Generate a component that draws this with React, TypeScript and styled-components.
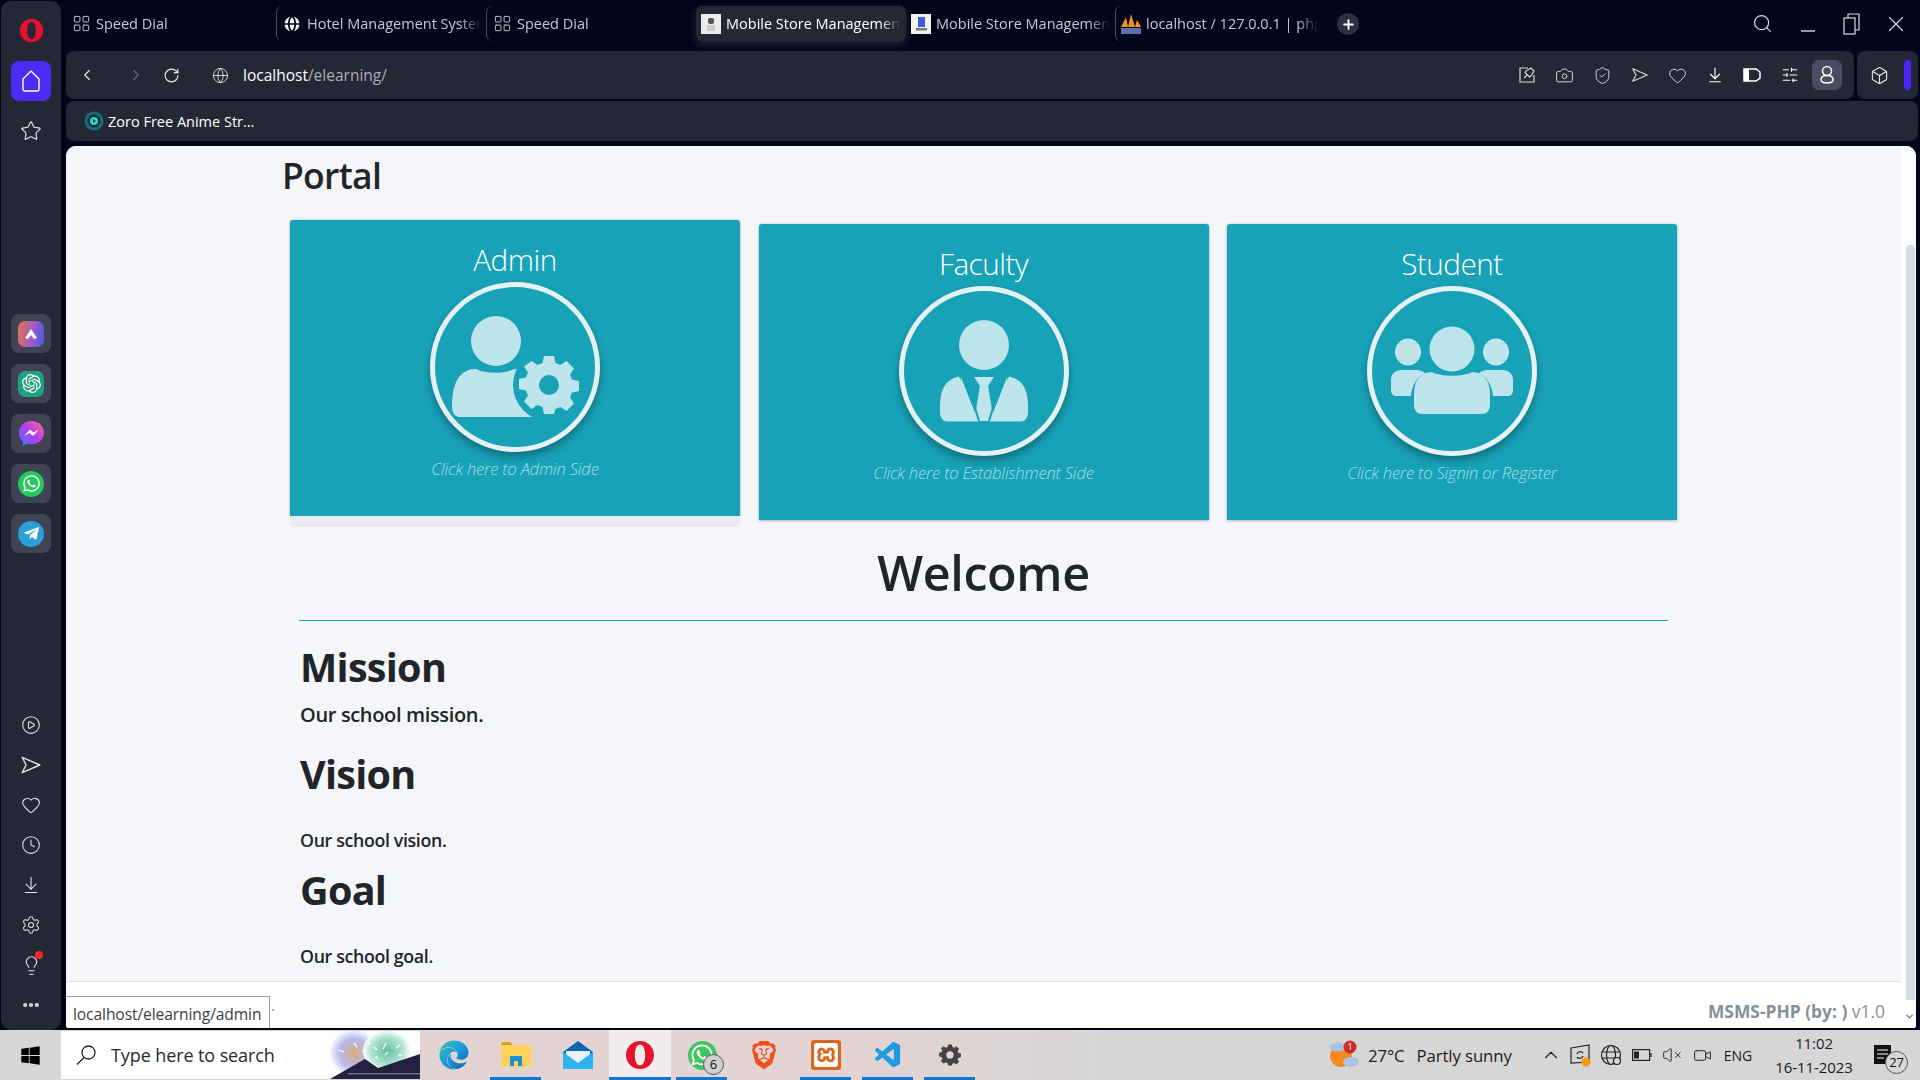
import React from "react";
import styled, { createGlobalStyle } from "styled-components";
import {
  ArrowDownToLine,
  Box,
  Camera,
  ChevronDown,
  ChevronLeft,
  ChevronRight,
  ChevronUp,
  Clock,
  Globe,
  Heart,
  Lightbulb,
  Plus,
  RotateCw,
  Search,
  Settings,
  ShieldCheck,
  SlidersHorizontal,
  Star,
  Video,
  VolumeX,
  X,
  CirclePlay,
  LayoutGrid,
  Ellipsis,
} from "lucide-react";
import { FaEdge, FaTelegramPlane, FaWhatsapp, FaWindows } from "react-icons/fa";
import { SiBrave, SiOpenai, SiXampp } from "react-icons/si";
import { VscVscode } from "react-icons/vsc";

const FONT = `"Open Sans", "Noto Sans", sans-serif`;

const GlobalStyle = createGlobalStyle`
  html, body {
    margin: 0;
    padding: 0;
    background: #03061a;
    overflow: hidden;
  }
  * {
    box-sizing: border-box;
  }
  body {
    font-family: ${FONT};
  }
`;

const Screen = styled.div`
  width: 1920px;
  height: 1080px;
  display: flex;
  flex-direction: column;
  background: #03061a;
`;

const Browser = styled.div`
  flex: 1;
  min-height: 0;
  display: flex;
`;

const Sidebar = styled.aside`
  width: 60px;
  margin: 1px 5px 0 1px;
  padding-top: 5px;
  background: #242835;
  border-radius: 10px;
  display: flex;
  flex-direction: column;
  align-items: center;
  color: #dfe1e6;
`;

const OperaSlot = styled.div`
  height: 49px;
  display: flex;
  align-items: center;
  justify-content: center;
`;

const HomeButton = styled.div`
  margin-top: 6px;
  width: 40px;
  height: 40px;
  border-radius: 8px;
  background: #4b2bf5;
  color: #fff;
  display: flex;
  align-items: center;
  justify-content: center;
`;

const StarSlot = styled.div`
  margin-top: 10px;
  height: 40px;
  display: flex;
  align-items: center;
  justify-content: center;
`;

const AppTiles = styled.div`
  margin-top: 163px;
  display: flex;
  flex-direction: column;
  gap: 11px;
`;

const AppTile = styled.div`
  width: 40px;
  height: 39px;
  border-radius: 8px;
  background: #404354;
  display: flex;
  align-items: center;
  justify-content: center;
`;

const AppBadge = styled.div<{ $bg: string; $square?: boolean; $size?: number }>`
  width: ${({ $size }) => $size ?? 26}px;
  height: ${({ $size }) => $size ?? 26}px;
  border-radius: ${({ $square }) => ($square ? "7px" : "50%")};
  background: ${({ $bg }) => $bg};
  display: flex;
  align-items: center;
  justify-content: center;
  color: #fff;
`;

const SideTools = styled.div`
  margin-top: 152px;
  display: flex;
  flex-direction: column;
  align-items: center;
`;

const SideTool = styled.div`
  position: relative;
  width: 40px;
  height: 40px;
  display: flex;
  align-items: center;
  justify-content: center;
  color: #dfe1e6;
`;

const RedDot = styled.span`
  position: absolute;
  top: 6px;
  right: 8px;
  width: 8px;
  height: 8px;
  border-radius: 50%;
  background: #f22727;
`;

const Chrome = styled.div`
  flex: 1;
  min-width: 0;
  display: flex;
  flex-direction: column;
`;

const TabStrip = styled.div`
  height: 51px;
  padding-top: 6px;
  display: flex;
  align-items: flex-start;
`;

const Tab = styled.div<{ $active?: boolean; $divider?: boolean; $w: number }>`
  position: relative;
  width: ${({ $w }) => $w}px;
  height: 35px;
  padding: 0 5px 0 5px;
  display: flex;
  align-items: center;
  gap: 5px;
  border-radius: 6px;
  background: ${({ $active }) => ($active ? "#242835" : "transparent")};
  box-shadow: ${({ $active }) => ($active ? "0 3px 8px rgba(70, 76, 100, 0.45)" : "none")};
  color: ${({ $active }) => ($active ? "#ffffff" : "#c6c8cf")};
  font-size: 14.5px;
  border-left: ${({ $divider }) => ($divider ? "1px solid #4a4d5c" : "0 none")};
`;

const TabTitle = styled.span`
  flex: 1;
  min-width: 0;
  white-space: nowrap;
  overflow: hidden;
  -webkit-mask-image: linear-gradient(90deg, #000 88%, transparent 100%);
  mask-image: linear-gradient(90deg, #000 88%, transparent 100%);
`;

const Favicon = styled.span`
  flex: none;
  width: 20px;
  height: 20px;
  display: flex;
  align-items: center;
  justify-content: center;
`;

const NewTab = styled.div`
  width: 22px;
  height: 22px;
  margin: 7px 0 0 14px;
  border-radius: 50%;
  background: #2c2f3e;
  color: #fff;
  display: flex;
  align-items: center;
  justify-content: center;
`;

const WindowControls = styled.div`
  margin-left: auto;
  padding-right: 11px;
  height: 35px;
  display: flex;
  align-items: center;
  gap: 22px;
  color: #d9dade;
`;

const ToolbarRow = styled.div`
  height: 48px;
  display: flex;
  gap: 3px;
`;

const AddressBar = styled.div`
  flex: 1;
  padding: 0 12px 0 12px;
  background: #242835;
  border-radius: 8px;
  display: flex;
  align-items: center;
  color: #e6e7eb;
`;

const NavButton = styled.span<{ $w: number; $dim?: boolean }>`
  width: ${({ $w }) => $w}px;
  display: flex;
  align-items: center;
  color: ${({ $dim }) => ($dim ? "#6b6e7b" : "#eceded")};
`;

const Url = styled.div`
  font-size: 15.5px;
  color: #a9acb6;
  margin-left: 13px;
  strong {
    font-weight: 400;
    color: #fff;
  }
`;

const ToolIcons = styled.div`
  margin-left: auto;
  display: flex;
  align-items: center;
  gap: 7.5px;
`;

const ToolIcon = styled.span<{ $active?: boolean; $bright?: boolean }>`
  width: 30px;
  height: 30px;
  border-radius: 7px;
  display: flex;
  align-items: center;
  justify-content: center;
  background: ${({ $active }) => ($active ? "#4a4c61" : "transparent")};
  color: ${({ $bright, $active }) => ($bright || $active ? "#ffffff" : "#d8dade")};
`;

const ExtensionBox = styled.div`
  width: 61px;
  margin-right: 2px;
  padding: 0 7px 0 13px;
  background: #242835;
  border-radius: 8px;
  display: flex;
  align-items: center;
  justify-content: space-between;
  color: #e8e9ec;
`;

const PurpleBar = styled.span`
  width: 7px;
  height: 30px;
  border-radius: 4px;
  background: #4f24f4;
`;

const BookmarksBar = styled.div`
  height: 40px;
  margin: 2px 2px 5px 0;
  padding-left: 18px;
  background: #242835;
  border-radius: 8px;
  display: flex;
  align-items: center;
  gap: 4px;
  font-size: 14.5px;
  color: #fff;
`;

const Page = styled.div`
  position: relative;
  flex: 1;
  min-height: 0;
  margin: 0 4px 2px 0;
  background: #fff;
  border-radius: 10px 10px 3px 3px;
  overflow: hidden;
  display: flex;
`;

const PageColumn = styled.div`
  flex: 1;
  min-width: 0;
  display: flex;
  flex-direction: column;
`;

const PageBody = styled.main`
  flex: 1;
  min-height: 0;
  background: #f4f6f9;
  overflow: hidden;
`;

const Container = styled.div`
  width: 1387px;
  margin: 0 auto;
`;

const PortalTitle = styled.h1`
  margin: 0 0 0 -8px;
  height: 78px;
  font-size: 35.5px;
  line-height: 58px;
  font-weight: 600;
  letter-spacing: -0.7px;
  color: #212529;
`;

const CardRow = styled.div`
  display: flex;
  gap: 18.5px;
`;

const Card = styled.div<{ $raised?: boolean }>`
  position: relative;
  width: 450px;
  height: 296px;
  padding-top: 19px;
  background: #18a2b8;
  border-radius: 3px 3px 0 0;
  box-shadow: 0 0 3px rgba(0, 0, 0, 0.16), 0 1px 3px rgba(0, 0, 0, 0.2);
  display: flex;
  flex-direction: column;
  align-items: center;
  transform: ${({ $raised }) => ($raised ? "translateY(-4px)" : "none")};
`;

const CardFoot = styled.div`
  position: absolute;
  top: 100%;
  left: 0;
  right: 0;
  height: 11px;
  background: #e9ebee;
  border-radius: 0 0 4px 4px;
`;

const CardTitle = styled.div`
  height: 43px;
  font-size: 29.7px;
  line-height: 42px;
  font-weight: 300;
  letter-spacing: -0.5px;
  color: #fff;
`;

const Avatar = styled.div`
  width: 170px;
  height: 170px;
  border: 5px solid #e6f1f3;
  border-radius: 50%;
  box-shadow: 0 5px 9px rgba(0, 0, 0, 0.32);
`;

const AvatarArt = styled.svg`
  display: block;
  margin: -5px;
  width: 170px;
  height: 170px;
  fill: #bee5eb;
`;

const CardHint = styled.div`
  margin-top: 5px;
  font-size: 16.6px;
  line-height: 24px;
  font-weight: 300;
  font-style: italic;
  letter-spacing: -0.2px;
  color: #a9dfe6;
`;

const WelcomeTitle = styled.h1`
  margin: 15px 0 0;
  height: 75px;
  text-align: center;
  font-size: 48.5px;
  line-height: 74px;
  font-weight: 600;
  letter-spacing: -0.4px;
  color: #212529;
`;

const Rule = styled.hr`
  margin: 10px 9px 0;
  border: 0;
  border-top: 1px solid #18a2b8;
`;

const TextBlock = styled.section`
  padding: 0 10px;
  color: #212529;
`;

const SectionTitle = styled.h2<{ $top: number }>`
  margin: ${({ $top }) => $top}px 0 0;
  height: 54px;
  font-size: 39.5px;
  line-height: 54px;
  font-weight: 700;
  letter-spacing: -0.7px;
`;

const SectionText = styled.p<{ $top: number }>`
  margin: ${({ $top }) => $top}px 0 0;
  height: 28px;
  font-size: 20px;
  line-height: 28px;
  font-weight: 600;
  letter-spacing: -0.35px;
`;

const SmallSectionText = styled(SectionText)`
  font-size: 17.8px;
`;

const PageFooter = styled.footer`
  height: 47px;
  padding: 0 16px 0 205px;
  background: #fff;
  border-top: 1px solid #dee2e6;
  display: flex;
  align-items: center;
  justify-content: space-between;
  font-size: 15.5px;
  color: #869099;
`;

const FooterCredit = styled.span`
  margin-top: 12px;
  font-size: 17.4px;
  strong {
    font-weight: 700;
  }
`;

const ScrollTrack = styled.div`
  position: relative;
  width: 15px;
  background: #fff;
`;

const ScrollThumb = styled.div`
  position: absolute;
  top: 99px;
  bottom: 28px;
  left: 5px;
  width: 9px;
  border-radius: 4px 4px 0 0;
  background: #d1dce4;
`;

const ScrollArrow = styled.span`
  position: absolute;
  bottom: 1px;
  left: 3px;
  color: #66727a;
`;

const StatusTip = styled.div`
  position: absolute;
  left: 0;
  bottom: 0;
  width: 204px;
  height: 32px;
  padding: 5px 0 0 7px;
  background: #fff;
  border: 1px solid #9aa0a6;
  border-left: 0;
  border-bottom: 0;
  font-size: 15.6px;
  line-height: 25px;
  letter-spacing: -0.1px;
  white-space: nowrap;
  color: #3b3f44;
`;

const Taskbar = styled.footer`
  height: 50px;
  display: flex;
  background: linear-gradient(90deg, #d6d6d6 0, #d6d6d6 420px, #e3d3d3 420px, #e3d3d3 850px, #d6d6d6 1130px);
`;

const StartButton = styled.div`
  width: 61px;
  display: flex;
  align-items: center;
  justify-content: center;
  color: #000;
`;

const SearchBox = styled.div`
  width: 359px;
  margin: 1px 0;
  padding-left: 14px;
  background: #fff;
  display: flex;
  align-items: center;
  gap: 14px;
  font-size: 18px;
  letter-spacing: -0.1px;
  color: #2a2a2a;
  overflow: hidden;
`;

const SearchArt = styled.svg`
  flex: none;
  margin-left: auto;
  width: 92px;
  height: 48px;
`;

const TaskApps = styled.div`
  margin-left: 3px;
  display: flex;
`;

const TaskApp = styled.div<{ $open?: boolean; $active?: boolean }>`
  position: relative;
  width: 62px;
  display: flex;
  align-items: center;
  justify-content: center;
  background: ${({ $active }) => ($active ? "#f2ecec" : "transparent")};
  &::after {
    content: "";
    display: ${({ $open }) => ($open ? "block" : "none")};
    position: absolute;
    left: ${({ $active }) => ($active ? "0" : "5px")};
    right: ${({ $active }) => ($active ? "0" : "6px")};
    bottom: 0;
    height: 3px;
    background: #0a78d4;
  }
`;

const CountBadge = styled.span`
  position: absolute;
  right: 9px;
  bottom: 5px;
  width: 21px;
  height: 21px;
  border-radius: 50%;
  background: #cfcfcf;
  border: 1px solid #555;
  font-size: 13px;
  line-height: 19px;
  text-align: center;
  color: #111;
`;

const Tray = styled.div`
  margin-left: auto;
  display: flex;
  align-items: center;
  color: #1c1c1c;
  font-size: 16.8px;
  letter-spacing: -0.1px;
`;

const TrayIcon = styled.span<{ $left: number }>`
  position: relative;
  margin-left: ${({ $left }) => $left}px;
  display: flex;
  align-items: center;
`;

const TrayText = styled.span<{ $left: number }>`
  margin-left: ${({ $left }) => $left}px;
  white-space: nowrap;
`;

const EngText = styled(TrayText)`
  font-size: 14px;
`;

const ClockBox = styled.div`
  width: 88px;
  margin-left: 18px;
  text-align: center;
  font-size: 15px;
  line-height: 24px;
`;

const NotifySlot = styled.div`
  position: relative;
  width: 56px;
  height: 50px;
  margin-left: 6px;
`;

const NotifyIcon = styled.svg`
  position: absolute;
  left: 10px;
  top: 15px;
`;

const NotifyCount = styled.span`
  position: absolute;
  left: 21px;
  top: 21px;
  width: 23px;
  height: 23px;
  border-radius: 50%;
  background: #d6d6d6;
  border: 1px solid #555;
  font-size: 13px;
  line-height: 21px;
  text-align: center;
  color: #111;
`;

const GradientEdge = styled(FaEdge)`
  fill: url(#edgeGrad);
`;

const BraveIcon = styled(SiBrave)`
  fill: #f1511b;
`;

const XamppTile = styled.span`
  width: 30px;
  height: 30px;
  border-radius: 3px;
  background: #d9661f;
  color: #fff;
  display: flex;
  align-items: center;
  justify-content: center;
`;

const GEAR =
  "M-5-29H5l1.500 7 5 2 6-4 7.500 7.500-4 6 2 5 7 1.500v10l-7 1.500-2 5 4 6-7.500 7.500-6-4-5 2L5 29H-5l-1.500-7-5-2-6 4-7.500-7.500 4-6-2-5-7-1.500v-10l7-1.500 2-5-4-6L-17.500-24l6 4 5-2zM0-10a10 10 0 1 0 0 20 10 10 0 1 0 0-20z";

const SendGlyph = ({ size = 20 }: { size?: number }) => (
  <svg width={size} height={size} viewBox="0 0 20 20" fill="none" stroke="currentColor" strokeWidth="1.3" strokeLinejoin="round">
    <path d="M2 3l16 7-16 7 3.5-7z" />
  </svg>
);

const OperaLogo = ({ size = 26 }: { size?: number }) => (
  <svg width={size} height={size} viewBox="0 0 30 30">
    <path
      fillRule="evenodd"
      fill="#e8112d"
      d="M15 1c7.800 0 14 6.300 14 14s-6.200 14-14 14S1 22.700 1 15 7.200 1 15 1zm0 3.500c-3.200 0-5.200 4.700-5.200 10.500s2 10.500 5.200 10.500 5.200-4.700 5.200-10.500S18.200 4.500 15 4.500z"
    />
  </svg>
);

const HomeGlyph = () => (
  <svg width="22" height="24" viewBox="0 0 22 24" fill="none" stroke="currentColor" strokeWidth="1.400" strokeLinejoin="round">
    <path d="M11 2L3 10v10a2 2 0 0 0 2 2h12a2 2 0 0 0 2-2V10z" />
  </svg>
);

const MessengerGlyph = () => (
  <svg width="27" height="27" viewBox="0 0 27 27">
    <path d="M13.500 1C6.500 1 1 6 1 12.800c0 3.600 1.500 6.700 4 8.800V26l4.300-2.300c1.300.4 2.700.6 4.200.6 7 0 12.500-5 12.500-11.500S20.500 1 13.500 1z" fill="url(#messengerGrad)" />
    <path d="M6 16l6-6.500 3.500 3 5.500-3-6 6.500-3.500-3z" fill="#fff" />
  </svg>
);

const RestoreGlyph = () => (
  <svg width="18" height="24" viewBox="0 0 18 24" fill="none" stroke="currentColor" strokeWidth="1.200">
    <rect x="1" y="6" width="11" height="16" />
    <path d="M5 6V2h11v16h-4" />
  </svg>
);

const PinNote = () => (
  <svg width="18" height="18" viewBox="0 0 18 18" fill="none" stroke="currentColor" strokeWidth="1.2">
    <path d="M10 2H2v14h14V9" />
    <path d="M6 12l3-3M8 5l5-3 3 3-3 5-1.500 1L7 6.500z" strokeLinejoin="round" />
  </svg>
);

const EasySetupBadge = () => (
  <svg width="18" height="14" viewBox="0 0 18 14">
    <path d="M1 1h12l4 3v6l-4 3H1z" fill="none" stroke="#fff" strokeWidth="1.500" />
    <path d="M1 1h5v12H1z" fill="#fff" />
  </svg>
);

const UserRound = () => (
  <svg width="18" height="20" viewBox="0 0 18 20" fill="none" stroke="currentColor" strokeWidth="1.500">
    <circle cx="9" cy="6" r="4.500" />
    <path d="M9 10.500c-4 0-6 2-6 4s2 3.500 6 3.500 6-1.500 6-3.500-2-4-6-4z" />
  </svg>
);

const AdminArt = () => (
  <AvatarArt viewBox="0 0 170 170">
    <circle cx="66" cy="59" r="25" />
    <path d="M22 124c0-24 8-37 24-37 10 5 29 5 38 0 14 0 24 12 24 37 0 8-3 11-9 11H30c-5 0-8-4-8-11z" />
    <circle cx="119" cy="103" r="36" fill="#18a2b8" />
    <g transform="translate(119 103)">
      <path fillRule="evenodd" d={GEAR} />
    </g>
  </AvatarArt>
);

const FacultyArt = () => (
  <AvatarArt viewBox="0 0 170 170">
    <circle cx="85" cy="59" r="25" />
    <path d="M41 122c0-17 4-27 17-31l2-.500 20 45H48c-4 0-7-4-7-9z" />
    <path d="M129 122c0-17-4-27-17-31l-2-.500-20 45h32c4 0 7-4 7-9z" />
    <path d="M75 91h20l-6 9 6 35H75l6-35z" />
    <path d="M62 91l17 44h-22zM108 91l-17 44h22z" />
    <path d="M67 91l13 44M103 91l-13 44" stroke="#18a2b8" strokeWidth="2" fill="none" />
  </AvatarArt>
);

const StudentArt = () => (
  <AvatarArt viewBox="0 0 170 170">
    <circle cx="85" cy="63" r="22.500" />
    <ellipse cx="41" cy="66" rx="13" ry="13.500" />
    <ellipse cx="129" cy="66" rx="13" ry="13.500" />
    <path d="M47 108c0-13 6-22 18-22 8 5 32 5 40 0 12 0 18 9 18 22v11c0 5-3 9-8 9H55c-5 0-8-4-8-9z" />
    <path d="M24 94c0-6 4-10 11-10h14c5 0 7 2 9 3-8 4-13 12-14 23H30c-4 0-6-2-6-6z" />
    <path d="M146 94c0-6-4-10-11-10h-14c-5 0-7 2-9 3 8 4 13 12 14 23h14c4 0 6-2 6-6z" />
  </AvatarArt>
);

const GradientDefs = () => (
  <svg width="0" height="0" aria-hidden="true">
    <defs>
      <linearGradient id="edgeGrad" x1="0" y1="0" x2="1" y2="1">
        <stop offset="0" stopColor="#36c2a0" />
        <stop offset="0.5" stopColor="#1a9be0" />
        <stop offset="1" stopColor="#0c5aa6" />
      </linearGradient>
      <linearGradient id="messengerGrad" x1="0" y1="1" x2="1" y2="0">
        <stop offset="0" stopColor="#3f7bff" />
        <stop offset="0.5" stopColor="#b43cf2" />
        <stop offset="1" stopColor="#ff6f7d" />
      </linearGradient>
      <radialGradient id="skyBlue" cx="0.5" cy="0.5" r="0.5">
        <stop offset="0" stopColor="#d6ac7c" />
        <stop offset="0.6" stopColor="#b9b9f0" />
        <stop offset="1" stopColor="#ffffff" />
      </radialGradient>
      <radialGradient id="skyGreen" cx="0.5" cy="0.5" r="0.5">
        <stop offset="0" stopColor="#5dbf9e" />
        <stop offset="0.7" stopColor="#b4e6d4" />
        <stop offset="1" stopColor="#ffffff" />
      </radialGradient>
    </defs>
  </svg>
);

const tabs = [
  { title: "Speed Dial", width: 210, icon: <LayoutGrid size={19} strokeWidth={1.2} /> },
  { title: "Hotel Management System", width: 210, divider: true, icon: <Globe size={20} fill="#fff" color="#03061a" /> },
  { title: "Speed Dial", width: 210, divider: true, icon: <LayoutGrid size={19} strokeWidth={1.2} /> },
  {
    title: "Mobile Store Management",
    width: 210,
    active: true,
    icon: (
      <svg width="20" height="20" viewBox="0 0 20 20">
        <rect width="20" height="20" fill="#ececec" />
        <rect x="7" y="4" width="6" height="6" rx="2" fill="#555" />
        <path d="M6 12h8M6 14h8M6 16h8" stroke="#aaa" />
      </svg>
    ),
  },
  {
    title: "Mobile Store Management",
    width: 209,
    icon: (
      <svg width="20" height="20" viewBox="0 0 20 20">
        <rect width="20" height="20" fill="#f3f3f3" />
        <rect x="7" y="3" width="7" height="10" fill="#3b5bdb" />
        <rect x="5" y="14" width="11" height="2.500" fill="#777" />
      </svg>
    ),
  },
  {
    title: "localhost / 127.0.0.1 | phpMyAdmin",
    width: 208,
    divider: true,
    icon: (
      <svg width="20" height="20" viewBox="0 0 20 20">
        <path d="M0 13L5 3l2 10zM7 13L10 0l4 13zM14 13l2-7 4 7z" fill="#f6931e" />
        <path d="M0 14h20v6H0z" fill="#5d6fa6" />
      </svg>
    ),
  },
];

const sideTools = [
  <CirclePlay key="play" size={20} strokeWidth={1.3} />,
  <SendGlyph key="send" size={22} />,
  <Heart key="heart" size={20} strokeWidth={1.3} />,
  <Clock key="clock" size={20} strokeWidth={1.3} />,
  <ArrowDownToLine key="down" size={20} strokeWidth={1.3} />,
  <Settings key="gear" size={20} strokeWidth={1.3} />,
];

const App = () => {
  return (
    <Screen>
      <GlobalStyle />
      <GradientDefs />
      <Browser>
        <Sidebar>
          <OperaSlot>
            <OperaLogo size={25} />
          </OperaSlot>
          <HomeButton>
            <HomeGlyph />
          </HomeButton>
          <StarSlot>
            <Star size={22} strokeWidth={1.3} />
          </StarSlot>
          <AppTiles>
            <AppTile>
              <AppBadge $square $bg="linear-gradient(100deg, #e8743f, #a05bc8 55%, #3f58e8)">
                <svg width="14" height="14" viewBox="0 0 14 14">
                  <path d="M1 11l6-9 6 9-3 1-3-4-3 4z" fill="#fff" />
                </svg>
              </AppBadge>
            </AppTile>
            <AppTile>
              <AppBadge $square $bg="#1fa07f">
                <SiOpenai size={19} />
              </AppBadge>
            </AppTile>
            <AppTile>
              <MessengerGlyph />
            </AppTile>
            <AppTile>
              <AppBadge $bg="#25c85a">
                <FaWhatsapp size={19} />
              </AppBadge>
            </AppTile>
            <AppTile>
              <AppBadge $bg="#2a9fd8">
                <FaTelegramPlane size={17} />
              </AppBadge>
            </AppTile>
          </AppTiles>
          <SideTools>
            {sideTools.map((icon, i) => (
              <SideTool key={i}>{icon}</SideTool>
            ))}
            <SideTool>
              <Lightbulb size={21} strokeWidth={1.3} />
              <RedDot />
            </SideTool>
            <SideTool>
              <Ellipsis size={20} strokeWidth={3} />
            </SideTool>
          </SideTools>
        </Sidebar>

        <Chrome>
          <TabStrip>
            {tabs.map((tab, i) => (
              <Tab key={i} $w={tab.width} $active={tab.active} $divider={tab.divider}>
                <Favicon>{tab.icon}</Favicon>
                <TabTitle>{tab.title}</TabTitle>
              </Tab>
            ))}
            <NewTab>
              <Plus size={15} strokeWidth={3} />
            </NewTab>
            <WindowControls>
              <Search size={21} strokeWidth={1.4} />
              <svg width="26" height="22" viewBox="0 0 26 22">
                <path d="M6 18h14" stroke="currentColor" strokeWidth="1.400" />
              </svg>
              <RestoreGlyph />
              <X size={26} strokeWidth={1.1} />
            </WindowControls>
          </TabStrip>

          <ToolbarRow>
            <AddressBar>
              <NavButton $w={49}>
                <ChevronLeft size={18} strokeWidth={1.5} />
              </NavButton>
              <NavButton $w={36} $dim>
                <ChevronRight size={18} strokeWidth={1.5} />
              </NavButton>
              <NavButton $w={49}>
                <RotateCw size={17} strokeWidth={1.6} />
              </NavButton>
              <NavButton $w={18}>
                <Globe size={17} strokeWidth={1.2} />
              </NavButton>
              <Url>
                <strong>localhost</strong>/elearning/
              </Url>
              <ToolIcons>
                <ToolIcon>
                  <PinNote />
                </ToolIcon>
                <ToolIcon>
                  <Camera size={19} strokeWidth={1.2} />
                </ToolIcon>
                <ToolIcon>
                  <ShieldCheck size={19} strokeWidth={1.2} />
                </ToolIcon>
                <ToolIcon>
                  <SendGlyph size={18} />
                </ToolIcon>
                <ToolIcon>
                  <Heart size={19} strokeWidth={1.2} />
                </ToolIcon>
                <ToolIcon $bright>
                  <ArrowDownToLine size={18} strokeWidth={1.5} />
                </ToolIcon>
                <ToolIcon $bright>
                  <EasySetupBadge />
                </ToolIcon>
                <ToolIcon $bright>
                  <SlidersHorizontal size={18} strokeWidth={1.5} />
                </ToolIcon>
                <ToolIcon $active>
                  <UserRound />
                </ToolIcon>
              </ToolIcons>
            </AddressBar>
            <ExtensionBox>
              <Box size={19} strokeWidth={1.4} />
              <PurpleBar />
            </ExtensionBox>
          </ToolbarRow>

          <BookmarksBar>
            <svg width="20" height="20" viewBox="0 0 20 20">
              <circle cx="10" cy="10" r="9.500" fill="#12707c" />
              <circle cx="10" cy="10" r="6.500" fill="#1c2a35" />
              <circle cx="10" cy="10" r="4" fill="#2ad4c7" />
              <path d="M9 8l3 2-3 2z" fill="#0d4a55" />
            </svg>
            Zoro Free Anime Str...
          </BookmarksBar>

          <Page>
            <PageColumn>
              <PageBody>
                <Container>
                  <PortalTitle>Portal</PortalTitle>
                  <CardRow>
                    <Card $raised>
                      <CardTitle>Admin</CardTitle>
                      <Avatar>
                        <AdminArt />
                      </Avatar>
                      <CardHint>Click here to Admin Side</CardHint>
                      <CardFoot />
                    </Card>
                    <Card>
                      <CardTitle>Faculty</CardTitle>
                      <Avatar>
                        <FacultyArt />
                      </Avatar>
                      <CardHint>Click here to Establishment Side</CardHint>
                    </Card>
                    <Card>
                      <CardTitle>Student</CardTitle>
                      <Avatar>
                        <StudentArt />
                      </Avatar>
                      <CardHint>Click here to Signin or Register</CardHint>
                    </Card>
                  </CardRow>
                  <WelcomeTitle>Welcome</WelcomeTitle>
                  <Rule />
                  <TextBlock>
                    <SectionTitle $top={19}>Mission</SectionTitle>
                    <SectionText $top={7}>Our school mission.</SectionText>
                    <SectionTitle $top={18}>Vision</SectionTitle>
                    <SmallSectionText $top={25}>Our school vision.</SmallSectionText>
                    <SectionTitle $top={9}>Goal</SectionTitle>
                    <SmallSectionText $top={25}>Our school goal.</SmallSectionText>
                  </TextBlock>
                </Container>
              </PageBody>
              <PageFooter>
                <span>.</span>
                <FooterCredit>
                  <strong>MSMS-PHP (by: )</strong> v1.0
                </FooterCredit>
              </PageFooter>
            </PageColumn>
            <ScrollTrack>
              <ScrollThumb />
              <ScrollArrow>
                <ChevronDown size={11} strokeWidth={2.5} />
              </ScrollArrow>
            </ScrollTrack>
            <StatusTip>localhost/elearning/admin</StatusTip>
          </Page>
        </Chrome>
      </Browser>

      <Taskbar>
        <StartButton>
          <FaWindows size={21} />
        </StartButton>
        <SearchBox>
          <svg width="22" height="22" viewBox="0 0 22 22" fill="none" stroke="#222" strokeWidth="1.300">
            <circle cx="13.500" cy="8.500" r="6.500" />
            <path d="M9 13.500L2 20.500" />
          </svg>
          Type here to search
          <SearchArt viewBox="0 0 92 48">
            <ellipse cx="26" cy="22" rx="25" ry="24" fill="url(#skyBlue)" />
            <ellipse cx="59" cy="20" rx="24" ry="21" fill="url(#skyGreen)" />
            <path d="M2 48L37 28l13 9 42-14v25z" fill="#232040" />
            <path d="M20 42h72v1.500H20z" fill="#6b6f86" />
            <path d="M10 19l6 2M26 12l3 4M40 9l2 5M46 16l3 3M57 24l3-3M58 12l-3 6M72 14l-4 3M34 20l3-1M70 24h4M48 25l2 3" stroke="#fff" strokeWidth="1.300" />
          </SearchArt>
        </SearchBox>
        <TaskApps>
          <TaskApp>
            <GradientEdge size={30} />
          </TaskApp>
          <TaskApp $open>
            <svg width="30" height="26" viewBox="0 0 30 26">
              <path d="M0 2a2 2 0 0 1 2-2h7l3 3h-12z" fill="#d8a016" />
              <rect y="3" width="30" height="22" fill="#ffd35c" />
              <path d="M9 24V14h12v10h-4v-5h-4v5z" fill="#1e8fd6" />
            </svg>
          </TaskApp>
          <TaskApp>
            <svg width="30" height="28" viewBox="0 0 30 28">
              <path d="M0 11L15 0l15 11v17H0z" fill="#0a67b8" />
              <path d="M3 10h24v8l-12 6-12-6z" fill="#e8f2fb" />
              <path d="M0 11l15 11 15-11v17H0z" fill="#2db4ef" />
            </svg>
          </TaskApp>
          <TaskApp $open $active>
            <OperaLogo size={30} />
          </TaskApp>
          <TaskApp $open>
            <AppBadge $bg="#3fc661" $size={29}>
              <FaWhatsapp size={24} />
            </AppBadge>
            <CountBadge>6</CountBadge>
          </TaskApp>
          <TaskApp>
            <BraveIcon size={28} />
          </TaskApp>
          <TaskApp $open>
            <XamppTile>
              <SiXampp size={24} />
            </XamppTile>
          </TaskApp>
          <TaskApp $open>
            <VscVscode size={31} color="#1f9be0" />
          </TaskApp>
          <TaskApp $open>
            <svg width="24" height="24" viewBox="-33 -33 66 66" fill="#444">
              <path fillRule="evenodd" d={GEAR} />
            </svg>
          </TaskApp>
        </TaskApps>
        <Tray>
          <svg width="30" height="30" viewBox="0 0 30 30">
            <circle cx="12" cy="16" r="11" fill="#f28a1c" />
            <ellipse cx="9" cy="7" rx="8" ry="4.500" fill="#a8c4e4" />
            <ellipse cx="22" cy="22" rx="8" ry="5" fill="#a8c4e4" />
            <circle cx="21" cy="7" r="6.500" fill="#cc2a2a" />
            <text x="21" y="10" fontSize="9" fill="#fff" textAnchor="middle" fontFamily="Open Sans">
              1
            </text>
          </svg>
          <TrayText $left={9}>27°C</TrayText>
          <TrayText $left={12}>Partly sunny</TrayText>
          <TrayIcon $left={28}>
            <ChevronUp size={22} strokeWidth={1.2} />
          </TrayIcon>
          <TrayIcon $left={8}>
            <svg width="22" height="24" viewBox="0 0 22 24" fill="none" stroke="#222" strokeWidth="1.200">
              <path d="M1 5l18-3v17L1 20z" />
              <path d="M7 11a3.500 3.500 0 0 1 6-1M13 13a3.500 3.500 0 0 1-6 1" />
              <circle cx="16" cy="19" r="4.500" fill="#f59a0c" stroke="none" />
            </svg>
          </TrayIcon>
          <TrayIcon $left={8}>
            <svg width="22" height="22" viewBox="0 0 22 22" fill="none" stroke="#222" strokeWidth="1.200">
              <circle cx="11" cy="11" r="9.500" />
              <ellipse cx="11" cy="11" rx="4.500" ry="9.500" />
              <path d="M2 8h18M2 14h18" />
              <circle cx="17" cy="17" r="3.500" fill="#d6d6d6" />
            </svg>
          </TrayIcon>
          <TrayIcon $left={10}>
            <svg width="20" height="12" viewBox="0 0 20 12" fill="none" stroke="#222" strokeWidth="1.200">
              <rect x="0.600" y="0.600" width="17" height="10.800" />
              <path d="M2 2.500h5v7H2z" fill="#222" stroke="none" />
              <path d="M19 4v4" />
            </svg>
          </TrayIcon>
          <TrayIcon $left={10}>
            <VolumeX size={20} strokeWidth={1.1} />
          </TrayIcon>
          <TrayIcon $left={11}>
            <Video size={19} strokeWidth={1.2} />
          </TrayIcon>
          <EngText $left={12}>ENG</EngText>
          <ClockBox>
            11:02
            <br />
            16-11-2023
          </ClockBox>
          <NotifySlot>
            <NotifyIcon width="17" height="19" viewBox="0 0 17 19">
              <rect width="17" height="19" fill="#111" />
              <path d="M3 5h11M3 9h11M3 13h7" stroke="#fff" />
            </NotifyIcon>
            <NotifyCount>27</NotifyCount>
          </NotifySlot>
        </Tray>
      </Taskbar>
    </Screen>
  );
};

export default App;
